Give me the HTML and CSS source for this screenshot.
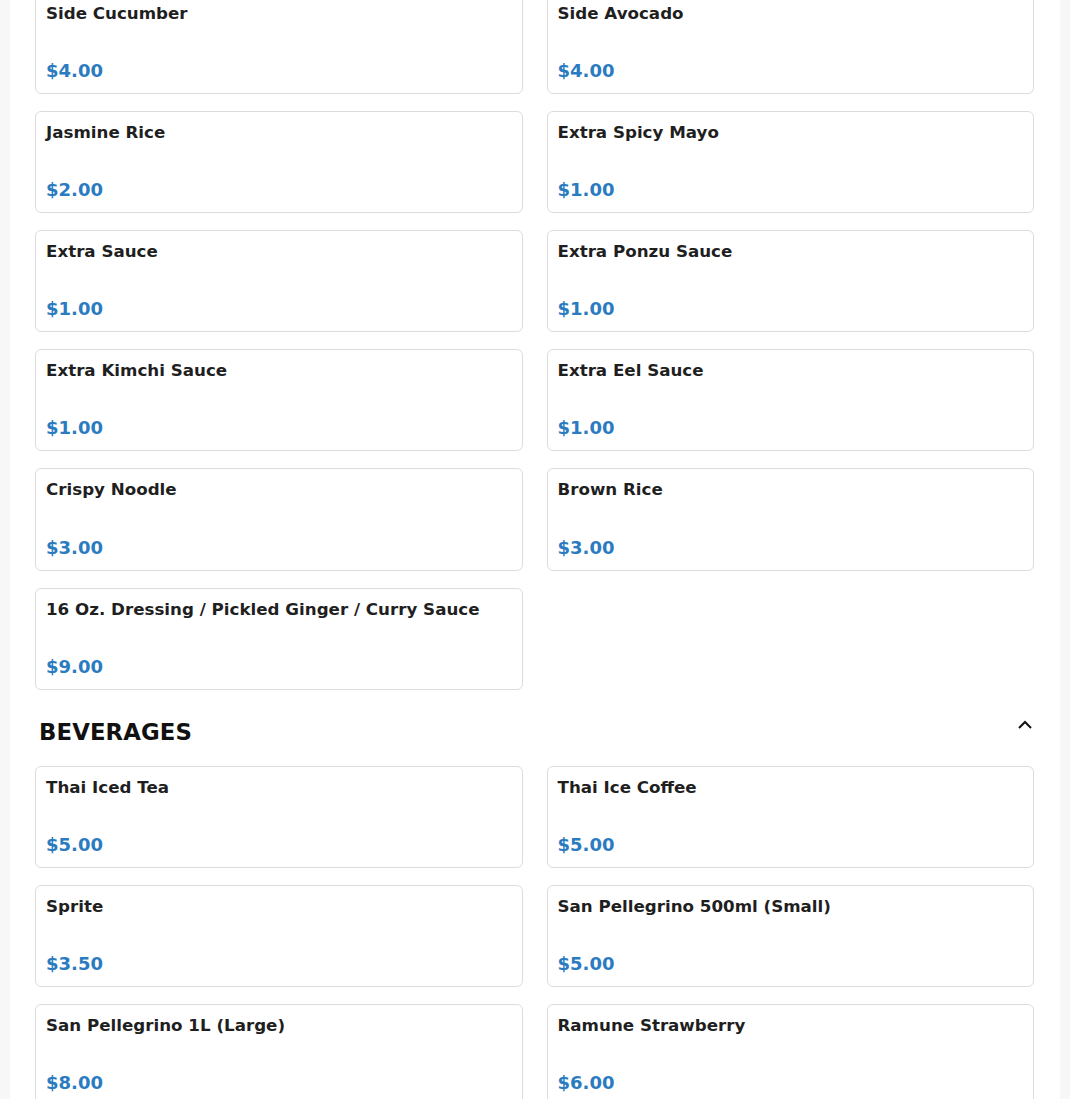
FILE: index.html
```html
<!DOCTYPE html>
<html>
<head>
<meta charset="utf-8">
<link rel="stylesheet" href="styles.css">
</head>
<body>
<div class="page">
  <div class="grid first">
    <div class="card"><div class="name">Side Cucumber</div><div class="price">$4.00</div></div>
    <div class="card"><div class="name">Side Avocado</div><div class="price">$4.00</div></div>
    <div class="card"><div class="name">Jasmine Rice</div><div class="price">$2.00</div></div>
    <div class="card"><div class="name">Extra Spicy Mayo</div><div class="price">$1.00</div></div>
    <div class="card"><div class="name">Extra Sauce</div><div class="price">$1.00</div></div>
    <div class="card"><div class="name">Extra Ponzu Sauce</div><div class="price">$1.00</div></div>
    <div class="card"><div class="name">Extra Kimchi Sauce</div><div class="price">$1.00</div></div>
    <div class="card"><div class="name">Extra Eel Sauce</div><div class="price">$1.00</div></div>
    <div class="card"><div class="name">Crispy Noodle</div><div class="price">$3.00</div></div>
    <div class="card"><div class="name">Brown Rice</div><div class="price">$3.00</div></div>
    <div class="card"><div class="name">16 Oz. Dressing / Pickled Ginger / Curry Sauce</div><div class="price">$9.00</div></div>
  </div>
  <div class="section-head">
    <h2 class="section-title">BEVERAGES</h2>
    <svg class="chev" width="16" height="10" viewBox="0 0 16 10"><path d="M2 8 L8 2 L14 8" fill="none" stroke="#111" stroke-width="2"/></svg>
  </div>
  <div class="grid">
    <div class="card"><div class="name">Thai Iced Tea</div><div class="price">$5.00</div></div>
    <div class="card"><div class="name">Thai Ice Coffee</div><div class="price">$5.00</div></div>
    <div class="card"><div class="name">Sprite</div><div class="price">$3.50</div></div>
    <div class="card"><div class="name">San Pellegrino 500ml (Small)</div><div class="price">$5.00</div></div>
    <div class="card"><div class="name">San Pellegrino 1L (Large)</div><div class="price">$8.00</div></div>
    <div class="card"><div class="name">Ramune Strawberry</div><div class="price">$6.00</div></div>
  </div>
</div>
</body>
</html>
```

FILE: styles.css
```css
html, body {
  margin: 0;
  padding: 0;
  background: #f7f7f7;
  font-family: "DejaVu Sans", sans-serif;
  overflow: hidden;
}
.page {
  margin: 0 10px;
  background: #fff;
  padding: 0 26px 40px 25px;
  min-height: 1200px;
}
.grid {
  display: grid;
  grid-template-columns: 1fr 1fr;
  column-gap: 24px;
  row-gap: 17px;
}
.grid.first {
  margin-top: -8.4px;
}
.card {
  border: 1px solid #dcdcdc;
  border-radius: 6px;
  padding: 10px 10px 11px;
  height: 102.2px;
  box-sizing: border-box;
  display: flex;
  flex-direction: column;
  justify-content: space-between;
}
.name {
  font-weight: bold;
  font-size: 16.7px;
  line-height: 20px;
  color: #1f1f1f;
}
.price {
  font-weight: bold;
  font-size: 18px;
  line-height: 22px;
  color: #2b7bc0;
}
.section-head {
  display: flex;
  align-items: center;
  justify-content: space-between;
  padding: 27px 0 19px 4px;
}
.section-title {
  margin: 0;
  font-size: 22.8px;
  line-height: 30px;
  font-weight: bold;
  color: #111;
  letter-spacing: 0.1px;
}
.chev {
  margin-right: 1px;
  margin-top: -14px;
}
```
